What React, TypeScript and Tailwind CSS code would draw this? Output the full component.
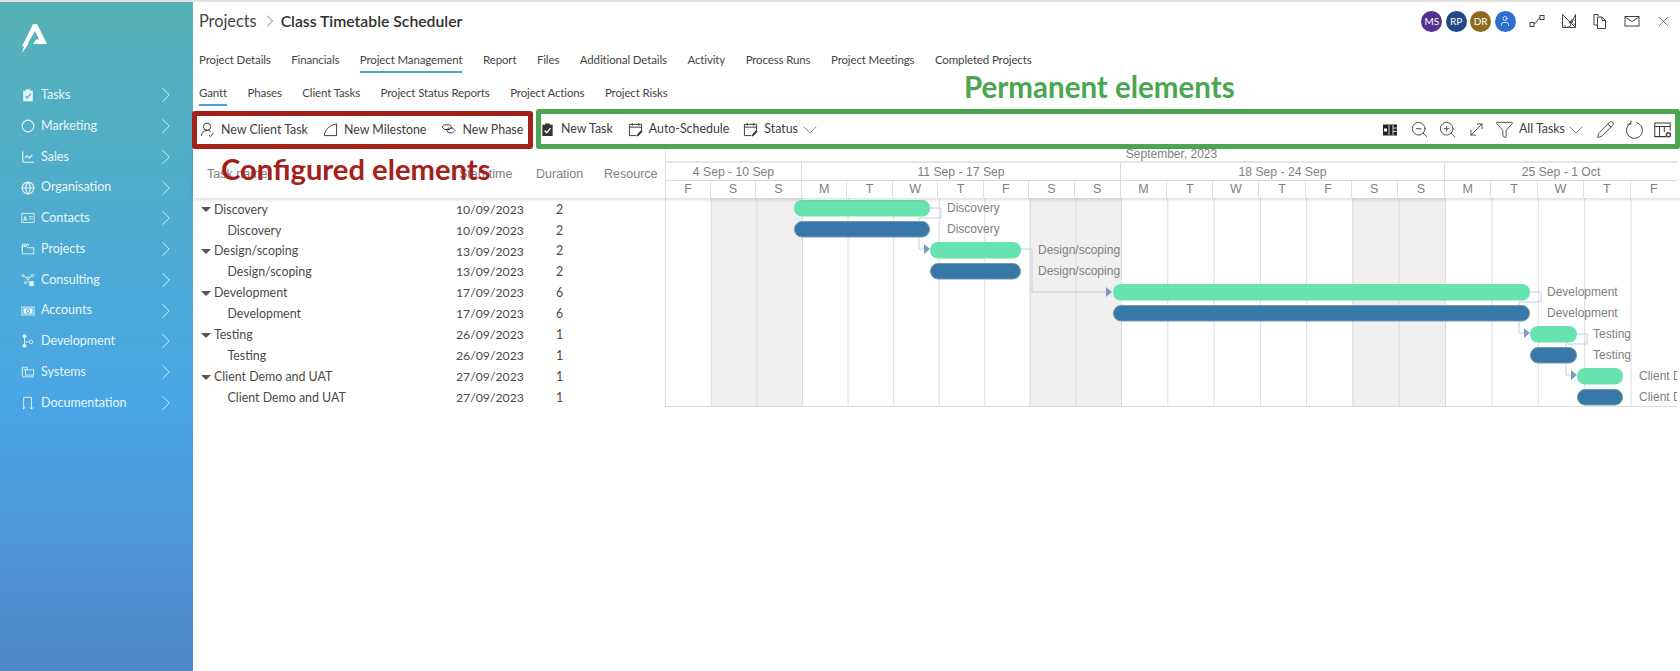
import React from "react";
import { ChevronRight, ChevronDown, Circle, Globe, ChartLine, X, ZoomIn, ZoomOut, Filter, Pencil, MoveDiagonal, User } from "lucide-react";

type IP = { className?: string };
const S = ({ className, children, sw = 1 }: IP & { children: React.ReactNode; sw?: number }) => (
  <svg viewBox="0 0 16 16" fill="none" stroke="currentColor" strokeWidth={sw} className={className}>{children}</svg>
);
const TaskFilled = ({ className }: IP) => (
  <svg viewBox="0 0 16 16" className={className}>
    <path d="M2.500 3h3V1.500h5V3h3v12h-11z" fill="currentColor" />
    <path d="M5 9l2.200 2.400L11.200 6.500" fill="none" stroke="var(--chk,#56b0c0)" strokeWidth="1.400" />
  </svg>
);
const ContactI = ({ className }: IP) => (<S className={className}><rect x="1" y="3" width="14" height="10" /><path d="M3 11l1.800-5L6.600 11M3.700 9.500h2.200M9 6.500h4.500M9 9h4.500" /></S>);
const FolderI = ({ className }: IP) => (<S className={className}><path d="M1.500 11V2.500h7v2" /><path d="M1.500 5h5l1 1.500h7v7h-13V5z" /><path d="M3.500 3.800h3" /></S>);
const NodesI = ({ className }: IP) => (<S className={className}><circle cx="2.500" cy="3" r="1.200" /><circle cx="8" cy="6" r="1.500" /><circle cx="13" cy="3" r="1.500" /><path d="M3.500 3.800 6.700 5.500M9.300 5.300 12 3.800M8 7.500v3" /><rect x="10" y="10" width="4" height="4.500" fill="currentColor" /><circle cx="5" cy="11" r="1.200" /></S>);
const MoneyI = ({ className }: IP) => (<S className={className}><rect x="1" y="3.500" width="14" height="9" /><rect x="2.800" y="5" width="10.500" height="6" fill="currentColor" stroke="none" /><circle cx="8" cy="8" r="1.800" stroke="#4ba6dc" /></S>);
const BranchI = ({ className }: IP) => (
  <svg viewBox="0 0 16 16" className={className} fill="currentColor" stroke="currentColor" strokeWidth="1">
    <circle cx="4" cy="2.500" r="1.800" /><circle cx="4" cy="13.500" r="1.800" /><path d="M4 3v10M4 9c1 0 2.500 0 5 0" fill="none" /><circle cx="11.500" cy="9" r="2" fill="none" />
  </svg>
);
const SystemI = ({ className }: IP) => (<S className={className}><path d="M1.500 13V2.500h5.500v3" /><rect x="5" y="5.500" width="9.500" height="6" /><path d="M1.500 13.500h13M3 5h2" /></S>);
const BookI = ({ className }: IP) => (<S className={className}><path d="M3 15V1.500h9V11" /><path d="M5 13.500H3M3 13v2M12 10.500v4.500M10 13l2 2 2-2" /></S>);
const UserLine = ({ className }: IP) => (<S className={className}><circle cx="7.500" cy="5" r="3.800" /><path d="M1.500 15c.5-3.500 2.500-6 6-6 2 0 3 .6 4 1.500M9.500 14l1.800 1.500 3-4" /></S>);
const MileI = ({ className }: IP) => (<S className={className}><path d="M1.500 14.500c0-5 5-11.500 13-12.500v12.500z" /></S>);
const PhaseI = ({ className }: IP) => (<S className={className}><path d="M1 5.500 4 3h5l2.500 2.500L9 8H4zM6 8.500 8 6.500h4.500L15 9l-2.500 2.500H8z" /></S>);
const CalPen = ({ className }: IP) => (<S className={className}><path d="M9 14.500H1.500V2.500h13v6.500M1.500 5.500h13M4.500 1v3M11.500 1v3" /><path d="M10 15l.5-2 3.500-4 1 1-3.500 4z" fill="currentColor" /></S>);
const SplitI = ({ className }: IP) => (
  <svg viewBox="0 0 16 16" className={className}><rect x="1" y="2.500" width="14" height="11" fill="#222" /><path d="M7 3v10M11 3v10M11 6h4M11 9.500h4" stroke="#fff" strokeWidth="0.800" /><path d="M2 6.500h3v3H2z" fill="#fff" /></svg>
);
const TableCog = ({ className }: IP) => (<S className={className} sw={0.85}><path d="M11 14H1.500V2.500h13V9M1.500 5.500h13M5.500 5.500V14M9.500 5.500V10" /><circle cx="13" cy="12.500" r="1.700" strokeWidth="1.200" /></S>);
const LinkI = ({ className }: IP) => (<S className={className}><rect x="1" y="9.500" width="4" height="4" /><rect x="11" y="2.500" width="4" height="4" /><path d="M5 11c2.500-.5 3.500-5 6-6.500" /></S>);
const RulerI = ({ className }: IP) => (<S className={className}><path d="M1.500 1.500v13h13V1.500L8.500 14" /><path d="M1.500 1.500 14 14M4 14.500V12M7 14.500V13M12.500 11l2 .5M13 7l1.500.5" /><path d="M11 10V6.500L8.500 10z" /></S>);
const CopyI = ({ className }: IP) => (<S className={className}><path d="M6 3V1.500H2V12h3" /><path d="M5.500 4H10l3.500 3.500v8h-8zM10 4v3.500h3.500" /></S>);
const MailI = ({ className }: IP) => (<S className={className}><rect x="1" y="3.500" width="14" height="9.500" /><path d="M1 4l7 4.500L15 4" /></S>);
const RefreshI = ({ className }: IP) => (<S className={className} sw={0.8}><path d="M9.500 2.200A6.700 6.700 0 1 1 4.500 3" /><path d="M5 .5v3H2" /></S>);

const nav: [string, React.FC<IP>][] = [
  ["Tasks", TaskFilled], ["Marketing", Circle as unknown as React.FC<IP>], ["Sales", ChartLine as unknown as React.FC<IP>],
  ["Organisation", Globe as unknown as React.FC<IP>], ["Contacts", ContactI], ["Projects", FolderI], ["Consulting", NodesI],
  ["Accounts", MoneyI], ["Development", BranchI], ["Systems", SystemI], ["Documentation", BookI],
];
const tabs = ["Project Details", "Financials", "Project Management", "Report", "Files", "Additional Details", "Activity", "Process Runs", "Project Meetings", "Completed Projects"];
const subTabs = ["Gantt", "Phases", "Client Tasks", "Project Status Reports", "Project Actions", "Project Risks"];
const rows: [string, string, number, boolean][] = [
  ["Discovery", "10/09/2023", 2, true], ["Discovery", "10/09/2023", 2, false],
  ["Design/scoping", "13/09/2023", 2, true], ["Design/scoping", "13/09/2023", 2, false],
  ["Development", "17/09/2023", 6, true], ["Development", "17/09/2023", 6, false],
  ["Testing", "26/09/2023", 1, true], ["Testing", "26/09/2023", 1, false],
  ["Client Demo and UAT", "27/09/2023", 1, true], ["Client Demo and UAT", "27/09/2023", 1, false],
];
const weeks = [
  { label: "4 Sep - 10 Sep", w: 137, days: ["F", "S", "S"], width: "w-[136px]", cols: "grid-cols-3" },
  { label: "11 Sep - 17 Sep", w: 319, days: ["M", "T", "W", "T", "F", "S", "S"], width: "w-[319px]", cols: "grid-cols-7" },
  { label: "18 Sep - 24 Sep", w: 324, days: ["M", "T", "W", "T", "F", "S", "S"], width: "w-[324px]", cols: "grid-cols-7" },
  { label: "25 Sep - 1 Oct", w: 232, days: ["M", "T", "W", "T", "F"], width: "w-[232px]", cols: "grid-cols-5" },
];
const X0 = 665, Y0 = 198;
const lines: number[] = [];
{ let x = X0; for (const w of weeks) { w.days.forEach((_, i) => lines.push(x + (i * w.w) / w.days.length)); x += w.w; } lines.push(x); }
const bars = [
  { x: 794, w: 136, y: 200, label: "Discovery", lx: 947 },
  { x: 930, w: 91, y: 242, label: "Design/scoping", lx: 1038 },
  { x: 1113, w: 417, y: 284, label: "Development", lx: 1547 },
  { x: 1530, w: 47, y: 326, label: "Testing", lx: 1593 },
  { x: 1577, w: 46, y: 368, label: "Client Demo and UAT", lx: 1639 },
];
const links = [
  { d: "M930 208H941V218H919V249H925", ax: 924, ay: 249 },
  { d: "M1021 249H1032V292H1107", ax: 1106, ay: 292 },
  { d: "M1530 292H1541V302H1519V333H1525", ax: 1524, ay: 333 },
  { d: "M1577 334H1587V344H1566V375H1572", ax: 1571, ay: 375 },
];

const Tool = ({ icon: I, label, ml }: { icon: React.FC<IP>; label: string; ml: string }) => (
  <div className={`flex items-center ${ml}`}>
    <I className="w-[15px] h-[15px] text-[#333]" />
    <span className="ml-[6px] text-[12.400px] text-[#3d3d3d] whitespace-nowrap">{label}</span>
  </div>
);
const Lu = "w-[19px] h-[19px] text-[#3a3a3a]";

export default function App() {
  return (
    <div className="relative flex h-[671px] w-[1680px] overflow-hidden bg-white border-t-2 border-[#e6e0e0] font-[Lato,sans-serif]">
      <aside className="w-[193px] shrink-0 flex flex-col bg-gradient-to-b from-[#56b1b4] via-[#49a6e6] via-60% to-[#4f86c9] text-[#e8f6fa]">
        <div className="h-[78px] pl-[21px] pt-[22px]">
          <svg viewBox="0 0 26 29" className="w-[26px] h-[29px]" fill="#fff">
            <path d="M12 0h4l10 20H12l3-4.500h3L14 7 7 19l1 0-7 10 2-7-2 .5z" />
          </svg>
        </div>
        <nav className="flex flex-col">
          {nav.map(([n, I]) => (
            <div key={n} className="h-[30.750px] flex items-center pl-[21px] pr-[14px]">
              <I className="w-[14px] h-[14px] shrink-0" />
              <span className="ml-[6px] text-[12.500px] flex-1">{n}</span>
              <ChevronRight className="w-[26px] h-[26px]" strokeWidth={0.8} />
            </div>
          ))}
        </nav>
      </aside>

      <main className="relative flex-1 flex flex-col min-w-0">
        <header className="h-[40px] shrink-0 flex items-center pl-[6px] pb-[2px]">
          <span className="text-[16.300px] text-[#444]">Projects</span>
          <ChevronRight className="w-[20px] h-[20px] ml-[3px] mr-[1px] text-[#666]" strokeWidth={1} />
          <span className="text-[15.750px] font-semibold text-[#2f2f2f]">Class Timetable Scheduler</span>
          <div className="ml-auto flex items-center pr-[8px] text-[#444]">
            <div className="flex items-center gap-[3.400px] text-white text-[10px]">
              <span className="w-[21px] h-[21px] rounded-full bg-[#54318f] flex items-center justify-center">MS</span>
              <span className="w-[21px] h-[21px] rounded-full bg-[#1f4a87] flex items-center justify-center">RP</span>
              <span className="w-[21px] h-[21px] rounded-full bg-[#8d6a1f] flex items-center justify-center">DR</span>
              <span className="w-[21px] h-[21px] rounded-full bg-[#2d6fd0] flex items-center justify-center"><User className="w-[12px] h-[12px]" strokeWidth={1.500} /></span>
            </div>
            <div className="ml-[13.500px] flex items-center gap-[15.500px]">
              <LinkI className="w-[16px] h-[16px]" />
              <RulerI className="w-[16px] h-[16px]" />
              <CopyI className="w-[16px] h-[16px]" />
              <MailI className="w-[16px] h-[16px]" />
              <X className="w-[17px] h-[17px]" strokeWidth={1} />
            </div>
          </div>
        </header>

        <div className="h-[31px] shrink-0 flex gap-[20.500px] pl-[6px] pt-[10px] text-[11.500px] tracking-[-0.13px] text-[#444]">
          {tabs.map((t) => (
            <span key={t} className={`h-[21px] leading-[16px] whitespace-nowrap ${t === "Project Management" ? "border-b-2 border-[#49a0e0]" : ""}`}>{t}</span>
          ))}
        </div>
        <div className="h-[33px] shrink-0 flex gap-[20.500px] pl-[6px] pt-[12px] text-[11.500px] tracking-[-0.13px] text-[#444]">
          {subTabs.map((t) => (
            <span key={t} className={`h-[21px] leading-[16px] whitespace-nowrap ${t === "Gantt" ? "border-b-2 border-[#49a0e0]" : ""}`}>{t}</span>
          ))}
        </div>

        <div className="mt-[3px] h-[40px] shrink-0 flex items-end -ml-[1px]">
          <div className="h-[38px] w-[341px] border-[5px] border-[#a5201a] rounded-[3px] flex items-center pl-[3px]">
            <Tool icon={UserLine} label="New Client Task" ml="" />
            <Tool icon={MileI} label="New Milestone" ml="ml-[15px]" />
            <Tool icon={PhaseI} label="New Phase" ml="ml-[15px]" />
          </div>
          <div className="ml-[3px] flex-1 h-[40px] border-[5px] border-[#4aa651] rounded-[3px] flex items-center pt-[1px] pr-[3px]">
            <Tool icon={TaskFilled} label="New Task" ml="-ml-[1px] [--chk:#fff]" />
            <Tool icon={CalPen} label="Auto-Schedule" ml="ml-[15px]" />
            <Tool icon={CalPen} label="Status" ml="ml-[14px]" />
            <ChevronDown className="w-[24px] h-[24px] text-[#555]" strokeWidth={0.7} />
            <div className="ml-auto flex items-center text-[#444]">
              <SplitI className="w-[16px] h-[16px] mr-[12px]" />
              <ZoomOut className={`${Lu} mr-[9.500px]`} strokeWidth={1.100} />
              <ZoomIn className={`${Lu} mr-[9.500px]`} strokeWidth={1.100} />
              <MoveDiagonal className={`${Lu} mr-[9px]`} strokeWidth={1.100} />
              <Filter className={Lu} strokeWidth={1.100} />
              <span className="ml-[5px] text-[12.400px] text-[#3d3d3d]">All Tasks</span>
              <ChevronDown className="-ml-[1px] w-[24px] h-[24px] text-[#555]" strokeWidth={0.7} />
              <Pencil className={`${Lu} ml-[8px]`} strokeWidth={1.100} />
              <RefreshI className={`${Lu} ml-[10px]`} />
              <TableCog className={`${Lu} ml-[9px]`} />
            </div>
          </div>
        </div>

        <section className="flex flex-col shrink-0">
          <div className="relative z-10 h-[49px] flex bg-white shadow-[0_2px_3px_rgba(0,0,0,0.13)] font-['Liberation_Sans',sans-serif] text-[#808080]">
            <div className="w-[472px] shrink-0 grid grid-cols-[263px_80px_68px_1fr] items-center text-[12.500px] pt-[1px]">
              <span className="pl-[14px]">Task name</span>
              <span className="pl-[3px]">Start time</span>
              <span>Duration</span>
              <span>Resource</span>
            </div>
            <div className="w-[1012px] shrink-0 border-l border-[#dcdcdc] flex flex-col">
              <div className="h-[14px] text-[12px] leading-[10px] text-center border-b-2 border-[#e4e4e4]">September, 2023</div>
              <div className="flex flex-1">
                {weeks.map((w) => (
                  <div key={w.label} className={`${w.width} flex flex-col border-r border-[#dcdcdc] last:border-r-0`}>
                    <div className="h-[18px] text-[12.200px] leading-[18px] text-center border-b border-[#dcdcdc]">{w.label}</div>
                    <div className={`grid flex-1 ${w.cols}`}>
                      {w.days.map((d, i) => (
                        <span key={i} className="text-[12.500px] leading-[16px] text-center border-r border-[#e0e0e0] last:border-r-0">{d}</span>
                      ))}
                    </div>
                  </div>
                ))}
              </div>
            </div>
          </div>

          <div className="flex">
            <div className="w-[472px] shrink-0 pt-[1.500px] text-[12.400px] text-[#4a4a4a]">
              {rows.map(([name, date, dur, parent], i) => (
                <div key={i} className="h-[20.900px] grid grid-cols-[263px_100px_1fr] items-center">
                  <div className={`flex items-center ${parent ? "pl-[8px]" : "pl-[34.500px]"}`}>
                    {parent && <span className="w-0 h-0 mr-[3px] border-x-[5px] border-x-transparent border-t-[5px] border-t-[#555]" />}
                    <span>{name}</span>
                  </div>
                  <span className="text-[12.250px]">{date}</span>
                  <span>{dur}</span>
                </div>
              ))}
            </div>
            <div className="relative w-[1012px] h-[209px] shrink-0 overflow-hidden font-['Liberation_Sans',sans-serif]">
              <svg viewBox={`${X0} ${Y0} 1012 209`} className="w-[1012px] h-[209px]">
                {[[711, 91], [1029, 92], [1352, 93]].map(([x, w]) => (
                  <rect key={x} x={x} y={Y0} width={w} height={209} fill="#efefef" />
                ))}
                {lines.map((x) => (
                  <line key={x} x1={x + 0.5} x2={x + 0.5} y1={Y0} y2={407} stroke="#dcdcdc" />
                ))}
                <line x1={X0} x2={1677} y1={406.5} y2={406.5} stroke="#dcdcdc" />
                {links.map((l) => (
                  <g key={l.d}>
                    <path d={l.d} fill="none" stroke="#bcd2ea" />
                    <path d={`M${l.ax} ${l.ay - 5}L${l.ax + 6} ${l.ay}L${l.ax} ${l.ay + 5}z`} fill="#7f9cc0" />
                  </g>
                ))}
                {bars.map((b) => (
                  <g key={b.y}>
                    <rect x={b.x} y={b.y} width={b.w} height={16.5} rx={8} fill="#66e3ae" />
                    <rect x={b.x + 0.5} y={b.y + 21.5} width={b.w - 1} height={15.5} rx={7.5} fill="#3678a8" stroke="#7d97ad" />
                  </g>
                ))}
              </svg>
              {bars.map((b) =>
                [0, 21].map((o) => (
                  <span
                    key={b.y + o}
                    className="absolute text-[12px] leading-[16px] text-[#808080] whitespace-nowrap"
                    style={{ left: b.lx - X0, top: b.y + o - Y0 }}
                  >
                    {b.label}
                  </span>
                ))
              )}
            </div>
          </div>
        </section>

        <span className="absolute left-[28px] top-[151px] z-20 text-[29.200px] leading-[32px] font-bold text-[#a5201a] whitespace-nowrap">Configured elements</span>
        <span className="absolute left-[771px] top-[69px] z-20 text-[29.500px] leading-[32px] font-bold text-[#4aa651] whitespace-nowrap">Permanent elements</span>
      </main>
    </div>
  );
}
